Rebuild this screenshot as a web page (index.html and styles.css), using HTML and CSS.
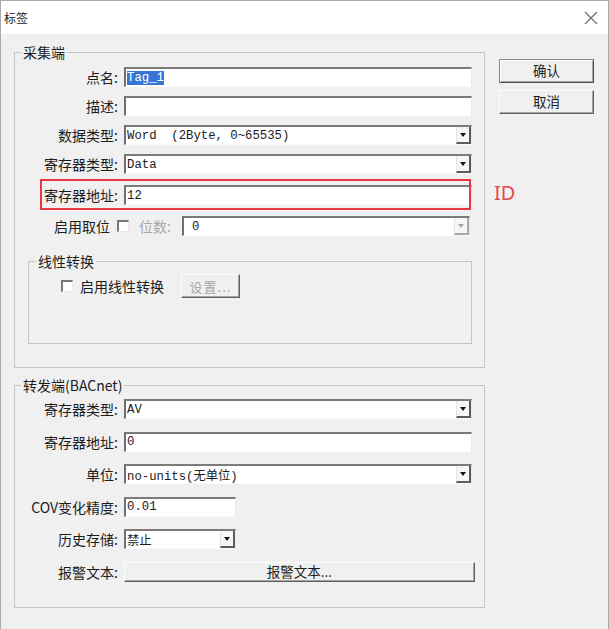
FILE: index.html
```html
<!DOCTYPE html>
<html lang="zh-CN">
<head>
    <meta charset="UTF-8">
    <title>标签</title>
    <link rel="stylesheet" href="styles.css">
</head>
<body>
    <div class="window">
        <div class="titlebar">
            <span class="title">标签</span>
            <svg class="close" width="14" height="14" viewBox="0 0 14 14">
                <path d="M1 1 L13 13 M13 1 L1 13" stroke="#6b6b6b" stroke-width="1.2" fill="none"/>
            </svg>
        </div>

        <div class="content">
            <div class="groups">
                <fieldset class="group collect">
                    <legend>采集端</legend>
                    <div class="rows">
                        <div class="row">
                            <label>点名:</label>
                            <div class="field"><span class="selected">Tag_1</span></div>
                        </div>
                        <div class="row">
                            <label>描述:</label>
                            <div class="field"></div>
                        </div>
                        <div class="row">
                            <label>数据类型:</label>
                            <div class="field select"><span>Word&nbsp;&nbsp;(2Byte,&nbsp;0~65535)</span><i class="arrow"></i></div>
                        </div>
                        <div class="row">
                            <label>寄存器类型:</label>
                            <div class="field select"><span>Data</span><i class="arrow"></i></div>
                        </div>
                        <div class="row marked">
                            <label>寄存器地址:</label>
                            <div class="field"><span>12</span></div>
                            <span class="note">ID</span>
                        </div>
                        <div class="row bit">
                            <label>启用取位</label>
                            <span class="checkbox"></span>
                            <span class="muted">位数:</span>
                            <div class="field select disabled"><span>0</span><i class="arrow"></i></div>
                        </div>
                    </div>

                    <fieldset class="subgroup">
                        <legend>线性转换</legend>
                        <div class="linear">
                            <span class="checkbox"></span>
                            <span class="check-label">启用线性转换</span>
                            <button class="btn small" disabled>设置...</button>
                        </div>
                    </fieldset>
                </fieldset>

                <fieldset class="group forward">
                    <legend>转发端(BACnet)</legend>
                    <div class="rows">
                        <div class="row">
                            <label>寄存器类型:</label>
                            <div class="field select"><span>AV</span><i class="arrow"></i></div>
                        </div>
                        <div class="row">
                            <label>寄存器地址:</label>
                            <div class="field"><span>0</span></div>
                        </div>
                        <div class="row">
                            <label>单位:</label>
                            <div class="field select"><span>no-units(无单位)</span><i class="arrow"></i></div>
                        </div>
                        <div class="row">
                            <label>COV变化精度:</label>
                            <div class="field short"><span>0.01</span></div>
                        </div>
                        <div class="row">
                            <label>历史存储:</label>
                            <div class="field select short"><span>禁止</span><i class="arrow"></i></div>
                        </div>
                        <div class="row">
                            <label>报警文本:</label>
                            <button class="btn wide">报警文本...</button>
                        </div>
                    </div>
                </fieldset>
            </div>

            <div class="actions">
                <button class="btn default">确认</button>
                <button class="btn">取消</button>
            </div>
        </div>
    </div>
</body>
</html>
```

FILE: styles.css
```css
body {
    margin: 0;
    font-family: "Noto Sans CJK SC", sans-serif;
    color: #1c1c1c;
    background-color: #fff;
}

.window {
    width: 609px;
    height: 629px;
    box-sizing: border-box;
    border: 1px solid #a9a9a9;
    border-bottom: none;
    background-color: #f0f0f0;
}

.titlebar {
    height: 33px;
    background-color: #fff;
    display: flex;
    align-items: center;
    justify-content: space-between;
    padding: 0 10px 0 3px;
}

.title {
    font-size: 12px;
    line-height: 14px;
}

.content {
    display: flex;
    gap: 14px;
    padding: 9px 0 0 13px;
}

.groups {
    width: 471px;
}

fieldset {
    margin: 0;
    min-width: 0;
    box-sizing: border-box;
    border: 1px solid #c4c4c4;
}

legend {
    padding: 0 2px;
    font-size: 14px;
    line-height: 18px;
}

.group {
    width: 471px;
    padding: 6px 12px 23px 0;
}

.group > legend {
    margin-left: 6px;
}

.group.forward {
    margin-top: 8px;
    padding: 5px 12px 25px 0;
}

.rows {
    display: flex;
    flex-direction: column;
    gap: 9px;
}

.forward .rows {
    gap: 12.6px;
}

.row {
    position: relative;
    display: grid;
    grid-template-columns: 103px 1fr;
    column-gap: 6px;
    align-items: center;
    height: 20px;
}

.row label {
    font-size: 14px;
    line-height: 20px;
    text-align: right;
    white-space: nowrap;
}

.row.marked {
    margin: 2px 0;
}

/* red annotation box drawn over the row */
.row.marked::after {
    content: "";
    position: absolute;
    left: 25px;
    right: 1px;
    top: -6px;
    bottom: -5px;
    border: 2px solid #e5393f;
    pointer-events: none;
}

.note {
    position: absolute;
    left: 479px;
    top: -2px;
    font-family: "Noto Sans", sans-serif;
    font-size: 20px;
    line-height: 20px;
    color: #e8464c;
}

.row.bit {
    display: flex;
    column-gap: 0;
}

.row.bit label {
    width: 95px;
    flex-shrink: 0;
}

.row.bit .checkbox {
    margin-left: 7px;
}

.muted {
    margin-left: 10px;
    font-size: 14px;
    line-height: 20px;
    white-space: nowrap;
    color: #a9a9a9;
}

.row.bit .field {
    margin-left: auto;
    margin-right: 2px;
    width: 288px;
    flex-shrink: 0;
    padding-left: 8px;
}

.field {
    height: 20px;
    box-sizing: border-box;
    display: flex;
    align-items: center;
    background-color: #fff;
    border-top: 2px solid #7b7b7b;
    border-left: 2px solid #6f6f6f;
    border-right: 1px solid #e9e9e9;
    border-bottom: 1px solid #fbfbfb;
    padding-left: 1px;
    font-family: "Liberation Mono", "Noto Sans CJK SC", monospace;
    font-size: 12.3px;
    white-space: pre;
}

.field.short {
    width: 112px;
}

.selected {
    background-color: #3675d3;
    color: #fff;
    line-height: 14px;
}

.arrow {
    margin-left: auto;
    width: 15px;
    height: 100%;
    box-sizing: border-box;
    display: flex;
    align-items: center;
    justify-content: center;
    background-color: #f6f6f6;
    border-left: 1px solid #e4e4e4;
    border-right: 2px solid #5c5c5c;
    border-bottom: 2px solid #5c5c5c;
}

.arrow::before {
    content: "";
    border-left: 3px solid transparent;
    border-right: 3px solid transparent;
    border-top: 4px solid #111;
}

.disabled .arrow {
    border-right-color: #a8a8a8;
    border-bottom-color: #a8a8a8;
}

.disabled .arrow::before {
    border-top-color: #a6a6a6;
}

.checkbox {
    width: 12px;
    height: 12px;
    box-sizing: border-box;
    background-color: #fff;
    border-top: 2px solid #777;
    border-left: 2px solid #777;
    border-right: 1px solid #e8e8e8;
    border-bottom: 1px solid #e8e8e8;
    flex-shrink: 0;
}

.subgroup {
    margin: 16px 0 0 13px;
    height: 92px;
    padding: 4px 0 0 0;
}

.subgroup legend {
    margin-left: 7px;
}

.linear {
    display: flex;
    align-items: center;
    margin-left: 32px;
}

.check-label {
    margin-left: 7px;
    font-size: 14px;
}

.btn {
    font-family: "Noto Sans CJK SC", sans-serif;
    font-size: 13.5px;
    color: #1c1c1c;
    background-color: #f0f0f0;
    border: 1px solid;
    border-color: #fdfdfd #5f5f5f #5f5f5f #fdfdfd;
    box-shadow: inset -1px -1px 0 #a3a3a3;
    padding: 0;
    line-height: 1;
}

.btn.small {
    margin-left: 17px;
    width: 59px;
    height: 24px;
    color: #a6a6a6;
    font-size: 13px;
    letter-spacing: 1px;
}

.btn.wide {
    height: 20px;
    margin-right: -3px;
    font-size: 13.5px;
}

.actions {
    display: flex;
    flex-direction: column;
    gap: 7px;
    padding-top: 16px;
}

.actions .btn {
    width: 95px;
    height: 24px;
}

.actions .btn.default {
    border-color: #8a8a8a #505050 #505050 #8a8a8a;
    box-shadow: inset 1px 1px 0 #fdfdfd, inset -1px -1px 0 #a3a3a3;
}
```
